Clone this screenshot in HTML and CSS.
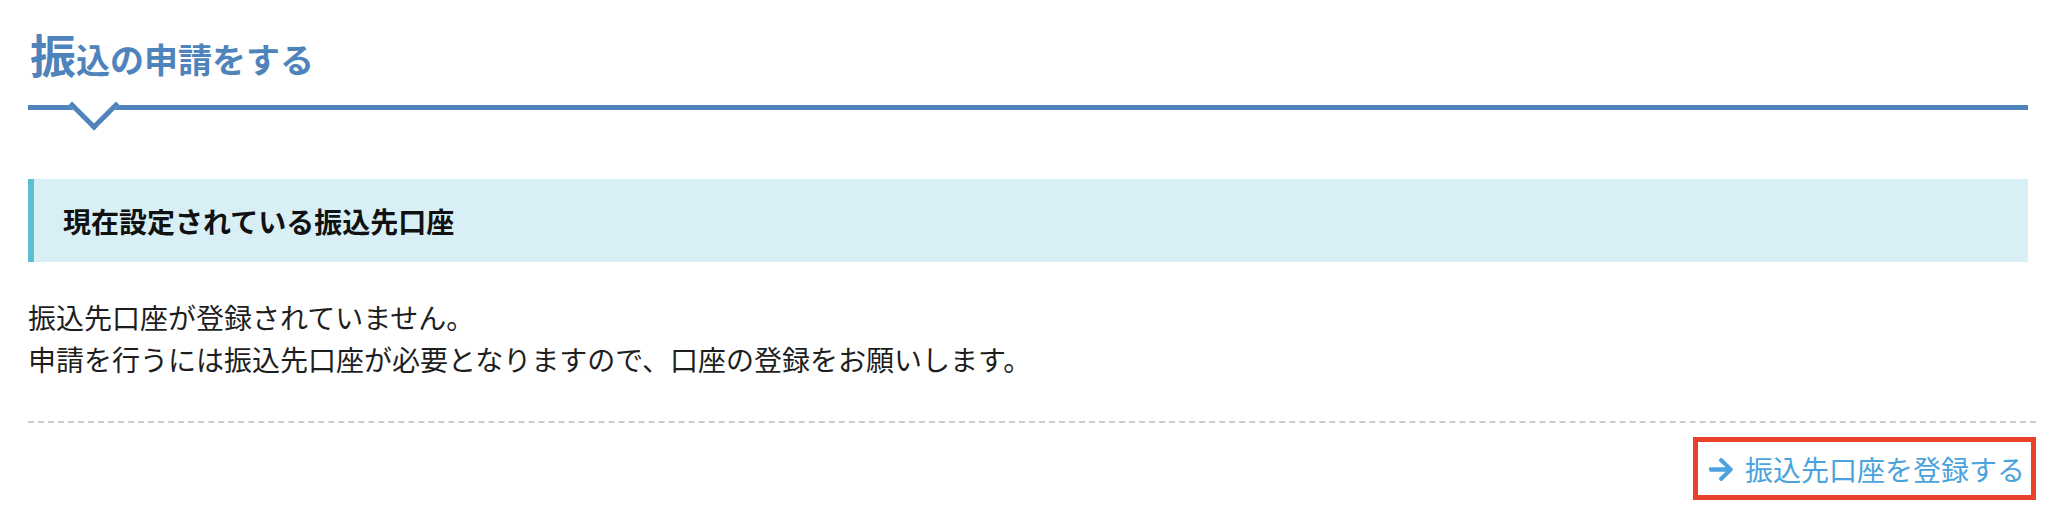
FILE: index.html
```html
<!DOCTYPE html>
<html lang="ja">
<head>
<meta charset="utf-8">
<title>振込の申請をする</title>
<link rel="stylesheet" href="styles.css">
</head>
<body>
<main class="page">
  <h2 class="page-title"><span class="title-first">振</span>込の申請をする</h2>

  <section class="account">
    <h3 class="account-heading">現在設定されている振込先口座</h3>
    <p class="account-text">振込先口座が登録されていません。<br>申請を行うには振込先口座が必要となりますので、口座の登録をお願いします。</p>
  </section>

  <div class="actions">
    <a class="register-link" href="#">
      <svg class="arrow-icon" viewBox="0 40 448 432" aria-hidden="true"><path d="M190.5 66.9l22.2-22.2c9.4-9.4 24.6-9.4 33.9 0L441 239c9.4 9.4 9.4 24.6 0 33.9L246.6 467.3c-9.4 9.4-24.6 9.4-33.9 0l-22.2-22.2c-9.5-9.5-9.3-25 .4-34.3L311.4 296H24c-13.3 0-24-10.7-24-24v-32c0-13.3 10.7-24 24-24h287.4L190.9 101.2c-9.8-9.3-10-24.8-.4-34.3z"/></svg>
      <span>振込先口座を登録する</span>
    </a>
  </div>
</main>
</body>
</html>
```
FILE: styles.css
```css
html, body {
  margin: 0;
  padding: 0;
  background: #ffffff;
}

body {
  font-family: "Noto Sans CJK JP", "Noto Sans", sans-serif;
  color: #222222;
}

.page {
  width: 2000px;
  margin-left: 28px;
}

.page-title {
  position: relative;
  margin: 0;
  padding: 22px 0 15px 2px;
  line-height: 62px;
  font-size: 34px;
  font-weight: 700;
  color: #4f83bb;
  border-bottom: 5px solid #4f83bb;
}

.title-first {
  font-size: 46px;
}

.page-title::after {
  content: "";
  position: absolute;
  left: 48px;
  top: calc(100% - 18px);
  width: 36px;
  height: 36px;
  box-sizing: border-box;
  background: #ffffff;
  border-right: 5px solid #4f83bb;
  border-bottom: 5px solid #4f83bb;
  transform: rotate(45deg);
}

.account {
  margin-top: 69px;
}

.account-heading {
  margin: 0;
  padding: 21px 0 20px 29px;
  line-height: 42px;
  font-size: 28px;
  font-weight: 700;
  color: #111111;
  background: #d8f0f5;
  border-left: 6px solid #5bbfd1;
}

.account-text {
  margin: 34px 0 0 0;
  font-size: 28px;
  line-height: 42px;
  color: #1e1e1e;
}

.actions {
  margin-top: 41px;
  border-top: 2px dashed #cccccc;
  padding-top: 14px;
  display: flex;
  justify-content: flex-end;
  margin-right: -8px;
}

.register-link {
  display: flex;
  align-items: center;
  gap: 12px;
  padding: 6px 6px 5px 11px;
  border: 5px solid #e8412c;
  color: #4aa3dc;
  text-decoration: none;
  font-size: 28px;
  line-height: 42px;
}

.arrow-icon {
  width: 24px;
  height: 23px;
  fill: #4aa3dc;
}
```
